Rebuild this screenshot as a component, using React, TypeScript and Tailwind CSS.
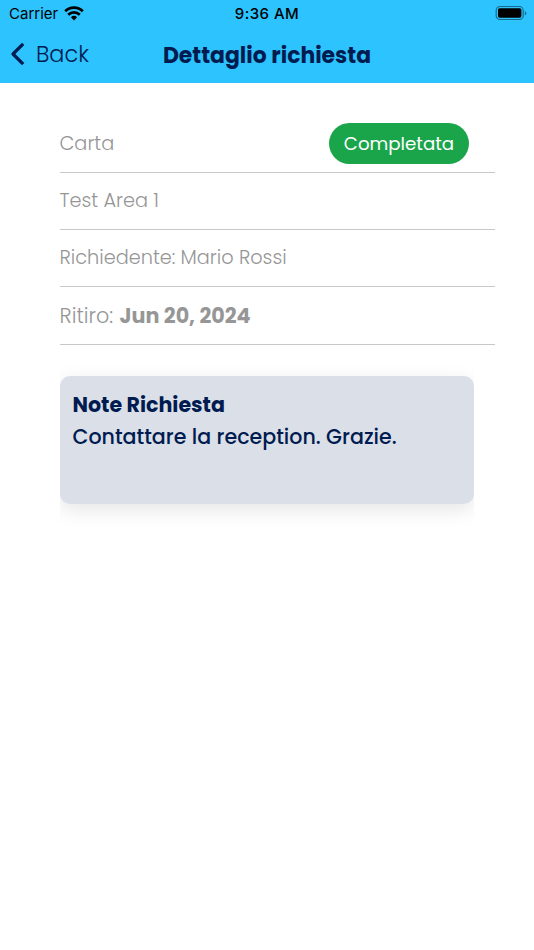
import React from "react";

const font = "font-[Poppins,Inter,sans-serif]";

function Row({ children, className }: { children: React.ReactNode; className: string }) {
  return (
    <div className={`flex items-center border-b border-[#c8c8c8] text-[#969696] whitespace-nowrap ${className}`}>
      {children}
    </div>
  );
}

export default function App() {
  return (
    <div className={`h-[950px] w-[534px] overflow-hidden bg-white ${font}`}>
      <header className="h-[83px] bg-[#2cc3ff]">
        <div className="grid h-[27px] grid-cols-3 items-center pl-[9px] pr-[7px] font-[Inter,sans-serif] text-black">
          <div className="flex items-center gap-[6px]">
            <span className="w-[49px] whitespace-nowrap text-[15px] leading-[28px]">Carrier</span>
            <svg className="-mt-px" width="20" height="15" viewBox="0 0 20 15" fill="none" stroke="black" strokeWidth="2.8">
              <path d="M1.2 5.2a12.7 12.7 0 0 1 17.6 0" />
              <path d="M4.2 8.7a8.5 8.5 0 0 1 11.6 0" />
              <path d="M10 14.4 6.9 11.2a4.5 4.5 0 0 1 6.2 0Z" fill="black" stroke="none" />
            </svg>
          </div>
          <span className="-ml-[2px] whitespace-nowrap text-center text-[15px] font-medium leading-[28px] tracking-[0.45px]">9:36 AM</span>
          <svg className="-mt-[2px] justify-self-end" width="32" height="16" viewBox="0 0 32 16">
            <rect x="1.2" y="1.5" width="27" height="13" rx="3.8" fill="none" stroke="#176d8f" strokeWidth="1.2" />
            <rect x="3" y="3.3" width="23.4" height="9.4" rx="1.6" fill="black" />
            <path d="M29.8 6v4.4q1.6-.7 1.6-2.2t-1.6-2.2Z" fill="#176d8f" />
          </svg>
        </div>
        <div className="grid h-[56px] grid-cols-[162px_210px_162px] items-center text-[#001b50]">
          <div className="flex items-center pb-[2px] pl-[10px]">
            <svg width="15" height="24" viewBox="0 0 15 24" fill="none" stroke="currentColor" strokeWidth="3.2" strokeLinejoin="round">
              <path d="M13.2 1.8 3 12l10.2 10.2" />
            </svg>
            <span className="pl-[11px] text-[22.4px] font-light leading-[30px]">Back</span>
          </div>
          <span className="whitespace-nowrap text-center text-[21.9px] font-bold leading-[31px]">Dettaglio richiesta</span>
        </div>
      </header>
      <main className="pl-[59.5px] pt-[32px]">
        <section className="w-[435.5px]">
          <Row className="h-[57.5px] justify-between pr-[26px] text-[19.3px] font-light">
            <span className="pt-[1.5px]">Carta</span>
            <span className="flex h-[41px] w-[140px] items-center justify-center rounded-full bg-[#1aa54a] pt-px text-[18.2px] font-normal text-white">
              <span>Completata</span>
            </span>
          </Row>
          <Row className="h-[57px] text-[19.3px] font-light"><span className="pt-[2px]">Test Area 1</span></Row>
          <Row className="h-[57px] text-[19.3px] font-light"><span className="pt-[2px]">Richiedente: Mario Rossi</span></Row>
          <Row className="h-[58.5px] text-[20.7px]">
            <span className="pt-px font-light">Ritiro:</span>
            <span className="pl-[6.5px] pt-px font-bold">Jun 20, 2024</span>
          </Row>
        </section>
        <section className="w-[414.9px] overflow-hidden pb-[40px] pt-[31px]">
          <div className="h-[128.4px] rounded-[10px] bg-[#dbe0e8] px-[13px] pt-[13px] text-[20.6px] leading-[32px] text-[#001b50] shadow-[0_6px_20px_rgba(0,0,0,0.1)]">
            <h2 className="whitespace-nowrap font-bold"><span>Note Richiesta</span></h2>
            <p className="whitespace-nowrap font-medium"><span>Contattare la reception. Grazie.</span></p>
          </div>
        </section>
      </main>
    </div>
  );
}
